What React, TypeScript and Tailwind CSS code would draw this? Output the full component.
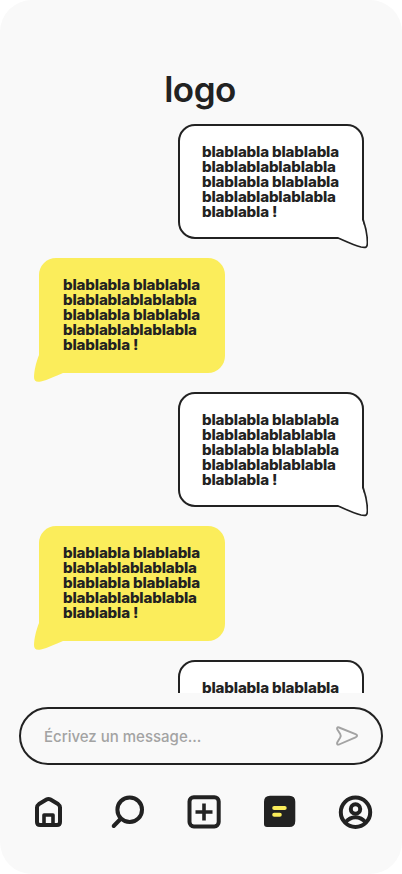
const INK = '#222222';

function Message({ mine }: { mine: boolean }) {
  return (
    <div
      className={
        mine
          ? 'relative ml-auto h-[115px] w-[186px] shrink-0 rounded-[17px] border-2 border-[#222222] bg-white pt-[18px] pl-[22px]'
          : 'relative h-[115px] w-[186px] shrink-0 rounded-[17px] bg-[#fbed5b] pt-[19px] pl-6'
      }
    >
      {mine ? (
        <svg className="absolute -right-[6px] -bottom-[13px]" width="34" height="34" viewBox="334 216 34 34">
          <path d="M338 237V216H362V219L368 240V245Q367 248 362 247Q352 245 338 238Z" fill="#fff" />
          <path d="M363 216V219Q367.3 232 367.4 242C367.6 247.5 366 248 361 247C353 245 345 241 338 238" fill="none" stroke={INK} strokeWidth="1.7" />
          <path d="M363 216V220M334 238H338.5" stroke={INK} strokeWidth="2" />
        </svg>
      ) : (
        <svg className="absolute -bottom-[10px] -left-[6px]" width="34" height="34" viewBox="33 349 34 34">
          <path d="M39 349V355C35.500 364 34.300 371 34 377C34 381 36 382.500 41 381.500C48 380 55 376 63 373H67V349Z" fill="#fbed5b" />
        </svg>
      )}
      <p className="relative w-[127px] origin-left scale-x-[1.08] font-['Inter',sans-serif] text-[14px] leading-[15px] font-extrabold tracking-[-0.16px] whitespace-nowrap text-[#222222]">
        blablabla blablabla
        <br />
        blablablablablabla
        <br />
        blablabla blablabla
        <br />
        blablablablablabla
        <br />
        blablabla !
      </p>
    </div>
  );
}

function Navigation() {
  return (
    <nav className="mt-[29px] flex h-[36px] w-full gap-10 pl-[31px]">
      <svg className="mr-[3px]" width="36" height="36" viewBox="31 794 36 36" fill="none" stroke={INK} strokeWidth="4" strokeLinejoin="round">
        <path d="M37 807.5Q37 805.500 39 804L46.500 799.500Q48.500 798.300 50.500 799.500L58 804Q60 805.500 60 807.500V822Q60 825 57 825H40Q37 825 37 822Z" />
        <path d="M44 825V815H53V825" strokeWidth="3.600" />
      </svg>
      <svg width="36" height="36" viewBox="110 794 36 36" fill="none" stroke={INK} strokeWidth="4" strokeLinecap="round">
        <circle cx="129.7" cy="809.7" r="12.3" />
        <path d="M120.500 819L113.700 826" />
      </svg>
      <svg width="36" height="36" viewBox="186 794 36 36" fill="none" stroke={INK} strokeWidth="4">
        <rect x="189.500" y="797.200" width="29.200" height="29.200" rx="4.300" />
        <path d="M195.500 812H212.500M204 803.500V820.500" strokeWidth="3.600" />
      </svg>
      <svg width="36" height="36" viewBox="262 794 36 36">
        <path d="M270 795.700H289.300Q295.300 795.700 295.300 801.700V821Q295.300 827 289.300 827H267Q264 827 264 824V801.700Q264 795.700 270 795.700Z" fill={INK} />
        <path d="M274.200 808H284.700M274.200 814.700H279.800" stroke="#fbed5b" strokeWidth="4" strokeLinecap="round" />
      </svg>
      <svg width="36" height="36" viewBox="338 794 36 36" fill="none" stroke={INK} strokeWidth="4">
        <circle cx="355.500" cy="812.300" r="14.700" />
        <circle cx="355.500" cy="809" r="4.700" />
        <path d="M345.300 822.500Q349.500 817.200 355.500 817.200T365.700 822.500" />
      </svg>
    </nav>
  );
}

export default function App() {
  return (
    <div className="h-[874px] w-[402px] bg-white">
      <main className="flex h-full w-full flex-col overflow-hidden rounded-[32px] bg-[#f9f9f9]">
        <header className="flex h-[124px] shrink-0 justify-center pt-[67px] pr-[2px]">
          <h1 className="font-['Inter',sans-serif] text-[35px] leading-[44px] font-semibold tracking-[-0.5px] text-[#222222]">logo</h1>
        </header>
        <section className="flex h-[569px] shrink-0 flex-col gap-[19px] overflow-hidden pr-[38px] pl-[39px]">
          <Message mine />
          <Message mine={false} />
          <Message mine />
          <Message mine={false} />
          <Message mine />
        </section>
        <div className="mx-[19px] mt-[14px] flex h-[58px] shrink-0 items-center justify-between rounded-full border-2 border-[#222222] pr-[22px] pl-[23px]">
          <span className="pt-px font-['Inter',sans-serif] text-[15px] leading-5 font-medium text-[#a3a3a3]">Écrivez un message...</span>
          <svg width="24" height="24" viewBox="335 724 24 24" fill="none" stroke="#a3a3a3" strokeWidth="1.900" strokeLinejoin="round">
            <path d="M339 727.500L355.500 734.200Q358.800 735.700 355.500 737.300L339 744.500Q336.500 745.200 337.200 742.500L340.200 737.500Q341.200 735.700 340.200 734L337.200 729.300Q336.500 726.700 339 727.500Z" />
          </svg>
        </div>
        <Navigation />
      </main>
    </div>
  );
}
